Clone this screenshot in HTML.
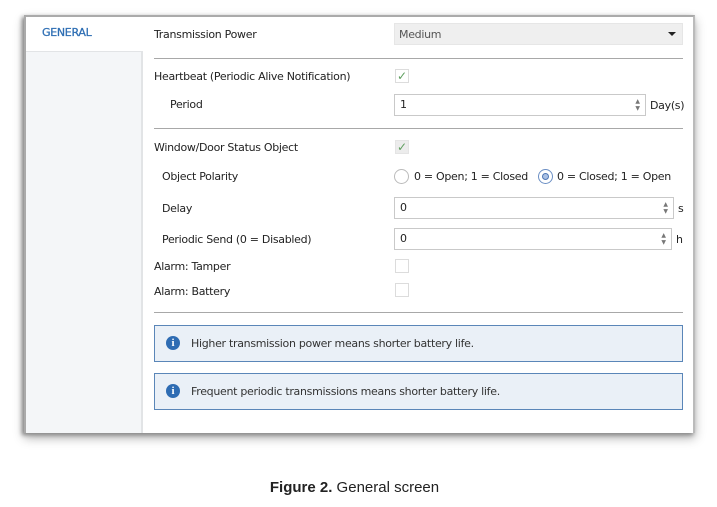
<!DOCTYPE html>
<html><head><style>
*{box-sizing:border-box;margin:0;padding:0}
body{width:717px;height:507px;background:#fff;position:relative;font-family:"DejaVu Sans","Liberation Sans",sans-serif;font-size:11px;color:#222;overflow:hidden}
.abs{position:absolute}
#win{left:24px;top:15px;width:671px;height:418px;background:#fff;box-shadow:-2px 2px 4px #888,0 5px 10px rgba(0,0,0,.3);border-top:2px solid #aaa;border-left:2px solid #aaa;border-right:2px solid #bbb}
.lbl{position:absolute;font-size:11px;letter-spacing:-0.3px;white-space:nowrap;line-height:14px}
.sep{position:absolute;left:154px;width:529px;height:1px;background:#a8a8a8}
.inp{position:absolute;border:1px solid #c9c9c9;background:#fff}
.inp span{position:absolute;left:5px;top:3px;font-size:11px}
.spin{position:absolute;right:5px;top:3px;font-size:6px;color:#777;line-height:7px}
.cb{position:absolute;width:14px;height:14px;border:1px solid #dcdcdc;background:#fff;color:#5f9f5f;font-size:12px;font-weight:bold;line-height:12px;text-align:center}
.info{position:absolute;left:154px;width:529px;height:37px;border:1px solid #5a86b8;background:#eaf0f7}
.info i{position:absolute;left:11px;top:10px;width:14px;height:14px;border-radius:50%;background:#2e6cb3;color:#fff;font-style:normal;font-weight:bold;font-size:11px;line-height:14px;text-align:center;font-family:"Liberation Serif",serif}
.info span{position:absolute;left:36px;top:11px;font-size:11px;letter-spacing:-0.3px;color:#333}
.rad{position:absolute;width:15px;height:15px;border-radius:50%;border:1px solid #bbb;background:#fff}
</style></head><body>
<div class="abs" id="win"></div>
<div class="abs" style="left:26px;top:52px;width:117px;height:381px;background:#f4f6f8;border-right:2px solid #e2e4e6"></div>
<div class="abs" style="left:26px;top:51px;width:117px;height:1px;background:#e2e4e6"></div>
<div class="lbl" style="left:42px;top:26px;color:#2f6fb4;font-size:11px;-webkit-text-stroke:0.3px #2f6fb4">GENERAL</div>

<div class="lbl" style="left:154px;top:28px">Transmission Power</div>
<div class="abs" style="left:394px;top:23px;width:289px;height:22px;background:#efefef;border:1px solid #e6e6e6"></div>
<div class="lbl" style="left:399px;top:28px;color:#555">Medium</div>
<div class="abs" style="left:668px;top:32px;width:0;height:0;border-left:4px solid transparent;border-right:4px solid transparent;border-top:4px solid #222"></div>
<div class="sep" style="top:58px"></div>

<div class="lbl" style="left:154px;top:70px">Heartbeat (Periodic Alive Notification)</div>
<div class="cb" style="left:395px;top:69px">✓</div>
<div class="lbl" style="left:170px;top:98px">Period</div>
<div class="inp" style="left:394px;top:94px;width:252px;height:22px"><span>1</span><div class="spin">▲<br>▼</div></div>
<div class="lbl" style="left:650px;top:99px">Day(s)</div>
<div class="sep" style="top:128px"></div>

<div class="lbl" style="left:154px;top:141px">Window/Door Status Object</div>
<div class="cb" style="left:395px;top:140px;background:#ececec;border-color:#e4e4e4">✓</div>
<div class="lbl" style="left:162px;top:170px">Object Polarity</div>
<div class="rad" style="left:394px;top:169px"></div>
<div class="lbl" style="left:414px;top:170px">0 = Open; 1 = Closed</div>
<div class="rad" style="left:538px;top:169px;border-color:#6b8fc4"><div class="abs" style="left:3px;top:3px;width:7px;height:7px;border-radius:50%;background:#a9c0e4;border:1px solid #4f77b5"></div></div>
<div class="lbl" style="left:557px;top:170px">0 = Closed; 1 = Open</div>

<div class="lbl" style="left:162px;top:202px">Delay</div>
<div class="inp" style="left:394px;top:197px;width:280px;height:22px"><span>0</span><div class="spin">▲<br>▼</div></div>
<div class="lbl" style="left:678px;top:202px">s</div>
<div class="lbl" style="left:162px;top:233px">Periodic Send (0 = Disabled)</div>
<div class="inp" style="left:394px;top:228px;width:278px;height:22px"><span>0</span><div class="spin">▲<br>▼</div></div>
<div class="lbl" style="left:676px;top:233px">h</div>
<div class="lbl" style="left:154px;top:260px">Alarm: Tamper</div>
<div class="cb" style="left:395px;top:259px"></div>
<div class="lbl" style="left:154px;top:285px">Alarm: Battery</div>
<div class="cb" style="left:395px;top:283px"></div>
<div class="sep" style="top:312px"></div>

<div class="info" style="top:325px"><i>i</i><span>Higher transmission power means shorter battery life.</span></div>
<div class="info" style="top:373px"><i>i</i><span>Frequent periodic transmissions means shorter battery life.</span></div>

<div class="abs" style="left:0;top:479px;width:717px;text-align:center;font-family:'Liberation Sans',sans-serif;font-size:15px;color:#222;padding-right:8px"><b>Figure 2.</b> General screen</div>
</body></html>
